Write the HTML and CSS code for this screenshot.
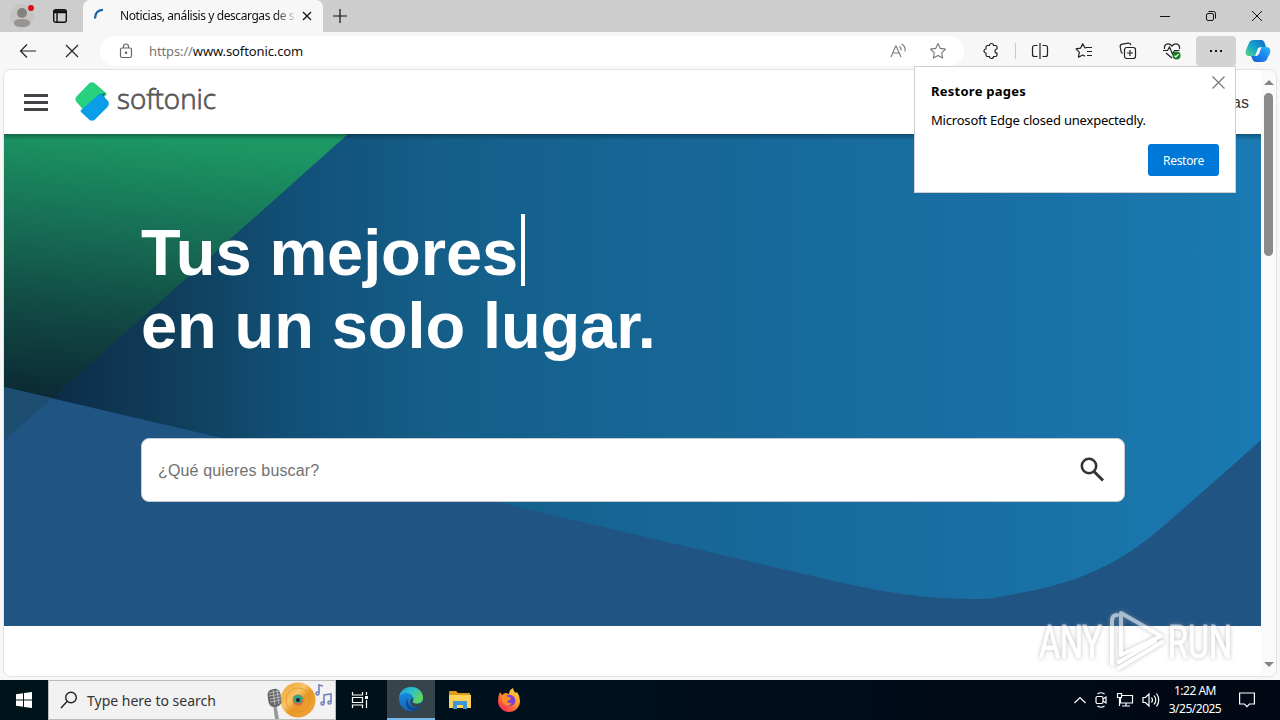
FILE: index.html
```html
<!DOCTYPE html>
<html lang="es">
<head>
    <meta charset="UTF-8">
    <title>Softonic</title>
    <link rel="stylesheet" href="styles.css">
</head>
<body>
<div class="tabbar">
    <div class="profile">
        <svg width="24" height="24" viewBox="0 0 24 24">
            <rect width="24" height="24" rx="12" fill="#c6c5c4"/>
            <circle cx="12" cy="9" r="5" fill="#858381"/>
            <path d="M4 19c0-3 3-4 8-4s8 1 8 4-4 4-8 4-8-1-8-4z" fill="#979593"/>
            <circle cx="21" cy="4" r="3" fill="#d90f16"/>
        </svg>
    </div>
    <svg class="workspaces" width="16" height="16" viewBox="0 0 16 16" fill="none" stroke="#111" stroke-width="1.4">
        <rect x="1.7" y="1.7" width="12.6" height="12.6" rx="2"/>
        <path d="M2 4.5h12M5 5v9M2 3h12"/>
    </svg>
    <div class="tab">
        <svg width="16" height="16" viewBox="0 0 16 16" fill="none" stroke="#1b62a8" stroke-width="2.2"><path d="M3 10.500C3 5 6 2 11 1.800"/></svg>
        <span class="tab-title">Noticias, análisis y descargas de s</span>
        <svg class="tab-close" width="10" height="10" viewBox="0 0 10 10" stroke="#111" stroke-width="1.3"><path d="M1 1l8 8M9 1l-8 8"/></svg>
    </div>
    <svg class="new-tab" width="14" height="14" viewBox="0 0 14 14" stroke="#111" stroke-width="1.2"><path d="M7 0v14M0 7h14"/></svg>
    <div class="window-buttons">
        <svg width="12" height="12" viewBox="0 0 12 12" stroke="#111"><path d="M1 6.500h10"/></svg>
        <svg width="12" height="12" viewBox="0 0 12 12" fill="none" stroke="#111"><rect x="1.500" y="3.500" width="7" height="7" rx="1.500"/><path d="M3.500 1.500h5a2 2 0 0 1 2 2v5"/></svg>
        <svg width="12" height="12" viewBox="0 0 12 12" stroke="#111"><path d="M1 1l10 10M11 1L1 11"/></svg>
    </div>
</div>

<div class="toolbar">
    <svg class="back" width="18" height="16" viewBox="0 0 18 16" fill="none" stroke="#222" stroke-width="1.2"><path d="M17 8H1.500M8 1.500L1.500 8 8 14.500"/></svg>
    <svg class="stop" width="14" height="14" viewBox="0 0 14 14" stroke="#222" stroke-width="1.2"><path d="M1 1l12 12M13 1L1 13"/></svg>
    <div class="address">
        <svg width="14" height="16" viewBox="0 0 14 16" fill="none" stroke="#666" stroke-width="1.200"><rect x="1.500" y="5" width="11" height="9.500" rx="1.500"/><path d="M4.500 5V3.500a2.500 2.500 0 0 1 5 0V5"/><circle cx="7" cy="9.800" r=".7" fill="#666"/></svg>
        <span class="url"><span class="scheme">https://</span>www.softonic.com</span>
        <svg class="read" width="17" height="16" viewBox="0 0 17 16" fill="none" stroke="#777" stroke-width="1.100"><path d="M1 14L5.700 3h.4L11 14M2.700 10h6.600M9.500 3.500q2 1.500 1.500 4M11.500 1q4.500 2.500 3.500 7.500"/></svg>
        <svg class="star" width="18" height="18" viewBox="0 0 18 18" fill="none" stroke="#777" stroke-width="1.100" stroke-linejoin="round"><path d="M9 1.500l2.300 4.900 5.200.7-3.800 3.700.9 5.300L9 13.600l-4.600 2.500.9-5.300-3.800-3.700 5.200-.7z"/></svg>
    </div>
    <div class="tools">
        <svg width="18" height="18" viewBox="0 0 18 18" fill="none" stroke="#222" stroke-width="1.200" stroke-linejoin="round"><path d="M5.500 3.500h2a2 2 0 0 1 4 0h2q1.500 0 1.500 1.500V7a2 2 0 0 0 0 4v2q0 1.500-1.500 1.500h-2a2 2 0 0 1-4 0h-2Q4 14.500 4 13v-2a2 2 0 1 1 0-4V5q0-1.500 1.500-1.500z"/></svg>
        <span class="divider"></span>
        <svg width="18" height="18" viewBox="0 0 18 18" fill="none" stroke="#222" stroke-width="1.200"><path d="M6.500 3.500H3.500a2 2 0 0 0-2 2v7a2 2 0 0 0 2 2h3M11.500 3.500h3a2 2 0 0 1 2 2v7a2 2 0 0 1-2 2h-3M9 1v16"/></svg>
        <svg width="18" height="18" viewBox="0 0 18 18" fill="none" stroke="#222" stroke-width="1.200" stroke-linejoin="round"><path d="M17 5.500h-5.300L10 6 7.700 1.800 5.500 6.200l-4.500.7 3.300 3.300-.8 5L7.700 13l2.300 1.200M12 9.500h5M12 13.500h5"/></svg>
        <svg width="18" height="18" viewBox="0 0 18 18" fill="none" stroke="#222" stroke-width="1.200"><path d="M3.500 11.500A3 3 0 0 1 2 9L1.200 5a2.500 2.500 0 0 1 2-2.900l6-1a2.500 2.500 0 0 1 2.700 2"/><rect x="5.500" y="5.500" width="11" height="11" rx="2.200"/><path d="M11 8v6M8 11h6"/></svg>
        <svg width="18" height="18" viewBox="0 0 18 18" fill="none" stroke="#222" stroke-width="1.200"><path d="M1.500 7C.8 1.500 6 .5 9 4c3-3.500 8.200-2.500 7.500 3M0 8.500h4.500L6.500 5l3 7 2-3.500h5M3 11l6 5"/><circle cx="13.500" cy="13.500" r="4" fill="#168020" stroke="none"/><path d="M11.500 13.700l1.400 1.300 2.600-2.800" stroke="#fff"/></svg>
        <span class="more"><i></i><i></i><i></i></span>
        <svg class="copilot" width="26" height="24" viewBox="0 0 26 24">
            <defs>
                <linearGradient id="cp1" x1="0" y1="1" x2="1" y2="0"><stop offset="0" stop-color="#62d57a"/><stop offset=".4" stop-color="#18aec4"/><stop offset="1" stop-color="#1265d2"/></linearGradient>
                <linearGradient id="cp2" x1="0" y1="1" x2="1" y2="0"><stop offset="0" stop-color="#1462cf"/><stop offset=".5" stop-color="#1c82f2"/><stop offset="1" stop-color="#2db9f5"/></linearGradient>
            </defs>
            <path d="M9 1h7q3 0 4 4l1 3h-4q-3 0-4 3l-2 6H5c-4 0-5-2-4-6l3-7q1-3 5-3z" fill="url(#cp1)"/>
            <path d="M17 23h-6q-3 0-4-4l-1-2h4q3 0 4-4l2-5h5c4 0 5 3 4 6l-3 6q-1 3-5 3z" fill="url(#cp2)"/>
            <path d="M13 9.500q1-1.500 3.500-1.500l-2.300 6.500Q13.300 17 10 17z" fill="#f7f7f7"/>
        </svg>
    </div>
</div>

<div class="viewport">
    <div class="page">
        <header>
            <div class="burger"><i></i><i></i><i></i></div>
            <svg class="logo" width="142" height="42" viewBox="0 0 142 42">
                <path d="M1 15L13 2.500q3-2.500 6 0l11 9.500q1.500 2-1 3L10 34l-2-4.500L.5 21q-2.500-3 .5-6z" fill="#27d17f"/>
                <path d="M22 13.500l8-1.500q-3 2-1.500 5z" fill="#1b7561"/>
                <path d="M5 29L23 13.500q2-1 3.500.5l5.500 6q2 3-.5 6L19 38.500q-3 2.500-6 0L5 31q-1-1 0-2z" fill="#0a9ee8"/>
                <text class="wordmark" x="41" y="28" textLength="99" lengthAdjust="spacingAndGlyphs">softonic</text>
            </svg>
            <span class="header-link">Noticias</span>
        </header>
        <section class="hero">
            <svg class="hero-bg" viewBox="0 0 1257 492" preserveAspectRatio="none">
                <defs>
                    <linearGradient id="sea" x1="0" x2="1" y1="0" y2="0"><stop offset="0" stop-color="#0b263d"/><stop offset=".05" stop-color="#0d2e49"/><stop offset=".15" stop-color="#10415f"/><stop offset=".23" stop-color="#125078"/><stop offset=".34" stop-color="#145e88"/><stop offset=".52" stop-color="#166696"/><stop offset=".8" stop-color="#1970a5"/><stop offset="1" stop-color="#1a7ab1"/></linearGradient>
                    <linearGradient id="leaf" gradientUnits="userSpaceOnUse" x1="100" y1="0" x2="74" y2="265"><stop offset="0" stop-color="#1c9764"/><stop offset=".35" stop-color="#176f55"/><stop offset=".7" stop-color="#114742"/><stop offset="1" stop-color="#0c2a35"/></linearGradient>
                    <linearGradient id="shade" x1="0" x2="0" y1="0" y2="1"><stop offset="0" stop-color="#000" stop-opacity=".3"/><stop offset="1" stop-color="#000" stop-opacity="0"/></linearGradient>
                </defs>
                <rect width="1257" height="492" fill="url(#sea)"/>
                <path d="M0 0h344L0 307z" fill="url(#leaf)"/>
                <path d="M0 253L830 447C890 461 930 465 975 465Q990 465 1005 461C1060 452 1105 437 1150 400Q1165 388 1257 306V492H0z" fill="#205483"/>
                <path d="M0 253L48 264 0 307z" fill="#1d4d70"/>
                <rect width="1257" height="6" fill="url(#shade)"/>
            </svg>
            <div class="hero-content">
                <h1>Tus mejores<span class="caret"></span><br>en un solo lugar.</h1>
                <div class="search">
                    <span>¿Qué quieres buscar?</span>
                    <svg width="26" height="26" viewBox="0 0 26 26" fill="none" stroke="#333" stroke-width="2.500"><circle cx="10" cy="9" r="7.200"/><path d="M15 14.500l9 9" stroke-width="3"/></svg>
                </div>
            </div>
        </section>
    </div>
    <div class="scrollbar">
        <i class="up"></i>
        <i class="thumb"></i>
        <i class="down"></i>
    </div>
</div>

<div class="popup">
    <svg class="popup-close" width="13" height="13" viewBox="0 0 13 13" stroke="#777" stroke-width="1.200"><path d="M.5.5l12 12M12.500.5l-12 12"/></svg>
    <h2>Restore pages</h2>
    <p>Microsoft Edge closed unexpectedly.</p>
    <button>Restore</button>
</div>

<svg class="watermark" width="200" height="70" viewBox="0 0 200 70">
    <g font-family="Roboto, sans-serif" font-size="46" font-weight="400">
        <text x="3" y="51" textLength="63" lengthAdjust="spacingAndGlyphs">ANY</text>
        <text x="132" y="51" textLength="64" lengthAdjust="spacingAndGlyphs">RUN</text>
    </g>
    <path d="M76 57V14q0-6 5-6M85 48V6l40 23M85 48l40-19M83 61l43-26M83 55l36-21" fill="none" stroke-width="4" stroke-linecap="round" stroke-linejoin="round"/>
</svg>

<div class="taskbar">
    <div class="start">
        <svg width="16" height="16" viewBox="0 0 16 16" fill="#fff"><path d="M0 2.200L7 1.200v6.300H0zM8 1.100L16 0v7.500H8zM0 8.500h7v6.300l-7-1zM8 8.500h8V16l-8-1.100z"/></svg>
    </div>
    <div class="task-search">
        <svg width="18" height="18" viewBox="0 0 18 18" fill="none" stroke="#222" stroke-width="1.400"><circle cx="11" cy="6.500" r="5.300"/><path d="M7 10.500L1 17"/></svg>
        <span>Type here to search</span>
        <svg class="doodle" width="70" height="38" viewBox="0 0 70 38">
            <defs><linearGradient id="disc" x1="0" x2="1" y1="0" y2="1"><stop offset="0" stop-color="#eda12c"/><stop offset=".4" stop-color="#f8c465"/><stop offset=".55" stop-color="#e99826"/><stop offset="1" stop-color="#f0a63a"/></linearGradient></defs>
            <circle cx="33" cy="19" r="17.500" fill="url(#disc)"/>
            <circle cx="33" cy="19" r="12" fill="none" stroke="#dd9125" stroke-width=".7"/>
            <circle cx="33" cy="19" r="5.500" fill="#e2674a"/>
            <path d="M28 17a5.500 5.500 0 0 1 10 0l-2 5h-6z" fill="#36a584"/>
            <circle cx="33" cy="19" r="2" fill="#222"/>
            <path d="M11 22l3 16h-4L8 23z" fill="#999"/>
            <rect x="3" y="8" width="13" height="18" rx="5.500" fill="#686868" transform="rotate(-8 9 17)"/>
            <path d="M4 12l11-2M4 15l11-2M5 18l11-2M5 21l11-2M8 9l2 15M12 9l2 14" stroke="#c6c6c6" stroke-width=".8"/>
            <g fill="none" stroke="#7280bd" stroke-width="1.600"><path d="M54 12V4l4 1M59 22v-8l7-1v8"/><circle cx="52.500" cy="12.500" r="1.500"/><circle cx="57.500" cy="22.500" r="1.500"/><circle cx="64.500" cy="21.500" r="1.500"/></g>
        </svg>
    </div>
    <div class="task">
        <svg width="18" height="18" viewBox="0 0 18 18" fill="none" stroke="#fff" stroke-width="1.200"><path d="M1.500 1v3h10V1M1.500 17v-3h10v3M1.500 6.500h10v5h-10zM15.500 1v3M15.500 9v8"/><path d="M14 5h3v3h-3z" fill="#fff" stroke="none"/></svg>
    </div>
    <div class="task active">
        <svg width="24" height="24" viewBox="0 0 24 24">
            <defs>
                <linearGradient id="e1" x1="0" x2="1" y1="0" y2=".5"><stop offset="0" stop-color="#2596d8"/><stop offset=".5" stop-color="#2bc0cd"/><stop offset="1" stop-color="#62d65b"/></linearGradient>
                <linearGradient id="e2" x1="0" x2="0" y1="0" y2="1"><stop offset="0" stop-color="#1b95e0"/><stop offset="1" stop-color="#1565c0"/></linearGradient>
            </defs>
            <circle cx="12" cy="12" r="12" fill="url(#e2)"/>
            <path d="M.2 10C1 4 6 0 12 0c7 0 12 5 12 10.500 0 4-3 6-6.500 6-2.500 0-4-1-4-2 0-.8 1-1.200 1-3C14.500 8.500 11 6 7.500 6 4 6 1.500 8 .2 10z" fill="url(#e1)"/>
            <path d="M9 11c-2 5 2 10 8 9.500 2 0 4-1 5.500-2-2 3.500-5 5.500-8.500 5.500-7-1-9-9-5-13z" fill="#114a8f"/>
            <path d="M13.500 14.500c0 1.500 2 2.500 4.500 2.500 2 0 4-.8 5.500-2.500L24 24l-2-5c-5 3-13 0-10-7l2.500-.5c0 1.500-1 2-1 3z" fill="#36454c"/>
        </svg>
    </div>
    <div class="task">
        <svg width="22" height="18" viewBox="0 0 22 18"><path d="M0 1q0-1 1-1h6l2 2h12v3H0z" fill="#dc9a1b"/><path d="M0 4h22v13H0z" fill="#fcd25a"/><path d="M4 18v-7q0-1 1-1h12q1 0 1 1v7h-4v-4H8v4z" fill="#3c97d5"/></svg>
    </div>
    <div class="task">
        <svg width="24" height="24" viewBox="0 0 24 24">
            <defs><linearGradient id="fx" x1="1" x2=".2" y1="0" y2="1"><stop offset="0" stop-color="#fff04b"/><stop offset=".45" stop-color="#ff9a23"/><stop offset="1" stop-color="#f5255b"/></linearGradient></defs>
            <path d="M3 4l2 3q2-2 4-2l3 1q0-4 4-6 0 3 3 5l1-1q3 4 3 9a11 11 0 0 1-22 0q0-5 2-9z" fill="url(#fx)"/>
            <circle cx="12.500" cy="12.500" r="5.800" fill="#7941d8"/>
            <path d="M5 8q3-2 6 1l3 1q0 2-4 3 1 3 5 2-3 5-8 1-3-3-2-8z" fill="#ff8d27"/>
        </svg>
    </div>
    <div class="tray">
        <svg width="12" height="12" viewBox="0 0 12 12" fill="none" stroke="#fff" stroke-width="1.200"><path d="M.5 9L6 3.500 11.500 9"/></svg>
        <svg width="14" height="18" viewBox="0 0 14 18" fill="none" stroke="#fff" stroke-width="1.200"><rect x="2" y="5.500" width="7" height="7" rx="1.500"/><path d="M9 8l3-2v6l-3-2M3.500 3Q7 .5 10.500 3M3.500 15Q7 17.500 10.500 15"/></svg>
        <svg width="18" height="16" viewBox="0 0 18 16" fill="none" stroke="#fff" stroke-width="1.200"><path d="M6 3.500h10.500v7.500H4.500V6M10 11v3M6 14h8M1.500 1.500h4v4h-4zM3.500 5.500V14"/></svg>
        <svg width="18" height="16" viewBox="0 0 18 16" fill="none" stroke="#fff" stroke-width="1.200"><path d="M1 5.500h2.500L7 2v12L3.500 10.500H1zM9.500 5.500q2 2.500 0 5M12 3.500q3.500 4.500 0 9M14.500 1.500q4.500 6.500 0 13"/></svg>
        <div class="clock">1:22 AM<br>3/25/2025</div>
        <svg class="notes" width="16" height="16" viewBox="0 0 16 16" fill="none" stroke="#fff" stroke-width="1.200"><path d="M.6 1h14.800v11H10.500L8 14.700 5.500 12H.6z"/></svg>
    </div>
</div>
</body>
</html>
```
FILE: styles.css
```css
* {
    box-sizing: border-box;
}

body {
    display: grid;
    grid-template-rows: 32px 37px 611px 40px;
    width: 1280px;
    height: 720px;
    margin: 0;
    overflow: hidden;
    position: relative;
    font: 12px/16px "Noto Sans", "Open Sans", sans-serif;
    color: #111;
    background: #f7f7f7;
}

svg {
    display: block;
    flex: none;
    overflow: visible;
}

/* tabs */
.tabbar {
    display: flex;
    align-items: center;
    background: #cdcdcd;
}

.profile {
    margin-left: 10px;
    margin-right: 18px;
}

.workspaces {
    margin-right: 15px;
}

.tab {
    display: flex;
    align-items: center;
    width: 240px;
    height: 32px;
    padding: 0 11px 0 9px;
    border-radius: 7px 7px 0 0;
    background: #f7f7f7;
}

.tab-title {
    width: 178px;
    margin-left: 12px;
    margin-right: 5px;
    white-space: nowrap;
    letter-spacing: -.42px;
    -webkit-mask-image: linear-gradient(90deg, #000 155px, transparent 178px);
    mask-image: linear-gradient(90deg, #000 155px, transparent 178px);
}

.new-tab {
    margin-left: 10px;
}

.window-buttons {
    display: flex;
    gap: 34px;
    margin-left: auto;
    margin-right: 17px;
}

/* toolbar */
.toolbar {
    display: flex;
    align-items: center;
}

.back {
    margin-left: 19px;
}

.stop {
    margin-left: 28px;
}

.address {
    display: flex;
    align-items: center;
    width: 864px;
    height: 30px;
    margin-left: 21px;
    padding: 0 17px 0 19px;
    border-radius: 15px;
    background: #fff;
}

.url {
    margin-left: 16px;
    font-size: 13px;
    letter-spacing: -.12px;
}

.scheme {
    color: #767676;
}

.read {
    margin-left: auto;
}

.star {
    margin-left: 22px;
}

.tools {
    display: flex;
    align-items: center;
    margin-left: 18px;
}

.tools > svg + svg {
    margin-left: 26px;
}

.divider {
    width: 1px;
    height: 16px;
    margin: 0 15px;
    background: #c8c8c8;
}

.more {
    display: flex;
    justify-content: center;
    align-items: center;
    gap: 3px;
    width: 40px;
    height: 30px;
    margin-left: 15px;
    border-radius: 4px;
    background: #d3d3d3;
}

.more i {
    width: 2px;
    height: 2px;
    background: #111;
}

.copilot {
    margin-left: 9px;
}

/* web content */
.viewport {
    display: flex;
    height: 608px;
    margin: 0 3px;
    border: 1px solid #e2e2e2;
    border-radius: 8px;
    overflow: hidden;
    background: #fff;
}

.page {
    width: 1257px;
}

header {
    display: flex;
    align-items: center;
    height: 64px;
    padding: 0 12px 0 20px;
    background: #fff;
}

.burger {
    display: grid;
    gap: 4px;
    width: 24px;
}

.burger i {
    height: 3px;
    background: #444246;
}

.logo {
    margin-left: 28px;
}

.wordmark {
    font: 300 28px "Open Sans", sans-serif;
    fill: #57585a;
    stroke: #57585a;
    stroke-width: .8px;
}

.header-link {
    margin-left: auto;
    padding-top: 2px;
    font: 16px "Liberation Sans", sans-serif;
    color: #333;
}

.hero {
    display: grid;
    height: 492px;
}

.hero-bg,
.hero-content {
    grid-area: 1 / 1;
}

.hero-bg {
    width: 1257px;
    height: 492px;
}

.hero-content {
    z-index: 1;
    padding: 80px 136px 0 137px;
}

h1 {
    margin: 0;
    padding-top: 2px;
    font: bold 65px/73px "Liberation Sans", sans-serif;
    letter-spacing: -.1px;
    color: #fff;
}

.caret {
    display: inline-block;
    width: 4px;
    height: 72px;
    margin-top: -2px;
    margin-left: 3px;
    vertical-align: top;
    background: #fff;
}

.search {
    display: flex;
    justify-content: space-between;
    align-items: center;
    height: 64px;
    margin-top: 76px;
    padding: 0 19px 0 16px;
    border: 1px solid #c5cbd0;
    border-radius: 8px;
    font: 16px "Liberation Sans", sans-serif;
    letter-spacing: .15px;
    color: #717171;
    background: #fff;
}

.search span {
    padding-top: 2px;
}

.scrollbar {
    display: flex;
    flex-direction: column;
    align-items: center;
    width: 15px;
    padding: 10px 0 9px;
    background: #fafafa;
}

.up,
.down {
    border: 5px solid transparent;
    border-top: 0;
    border-bottom: 5px solid #858585;
}

.down {
    margin-top: auto;
    border-top: 5px solid #858585;
    border-bottom: 0;
}

.thumb {
    width: 9px;
    height: 163px;
    margin-top: 8px;
    border-radius: 5px;
    background: #8a8a8a;
}

/* restore bubble over the page */
.popup {
    position: absolute;
    top: 66px;
    left: 914px;
    width: 322px;
    height: 127px;
    padding: 15px 16px;
    border: 1px solid #cfcfcf;
    color: #000;
    background: #fff;
}

.popup-close {
    position: absolute;
    top: 9px;
    right: 10px;
}

.popup h2 {
    margin: 0 0 10px;
    font-size: 13px;
    line-height: 18px;
    letter-spacing: .25px;
}

.popup p {
    margin: 0;
    font-size: 13px;
    line-height: 20px;
    letter-spacing: -.2px;
}

.popup button {
    display: block;
    width: 71px;
    height: 32px;
    margin: 14px 0 0 auto;
    padding: 0;
    border: 0;
    border-radius: 3px;
    font: 12px "Noto Sans", sans-serif;
    letter-spacing: -.3px;
    color: #fff;
    background: #0078d7;
}

.watermark {
    position: absolute;
    top: 607px;
    left: 1036px;
    fill: #fff;
    stroke: #fff;
    opacity: .62;
    filter: drop-shadow(0 0 2px #999);
}

/* taskbar */
.taskbar {
    display: flex;
    background: linear-gradient(90deg, #00141b, #000f1d 50%, #020713);
}

.start {
    display: grid;
    place-items: center;
    width: 48px;
}

.task-search {
    display: flex;
    align-items: center;
    width: 288px;
    padding-left: 11px;
    border: 1px solid #bbb;
    font-size: 14px;
    color: #333;
    background: #f2f2f2;
}

.task-search span {
    margin-left: 9px;
    padding-top: 2px;
}

.doodle {
    margin-left: auto;
}

.task {
    display: grid;
    place-items: center;
    width: 48px;
    margin-right: 1px;
}

.task:nth-child(3) {
    margin-right: 3px;
}

.active {
    border-bottom: 2px solid #76b9ed;
    background: #36454c;
}

.tray {
    display: flex;
    align-items: center;
    gap: 8px;
    margin-left: auto;
    padding-right: 25px;
}

.clock {
    width: 54px;
    text-align: center;
    white-space: nowrap;
    line-height: 18px;
    letter-spacing: -.5px;
    color: #fff;
}

.notes {
    margin-left: 9px;
}
```
